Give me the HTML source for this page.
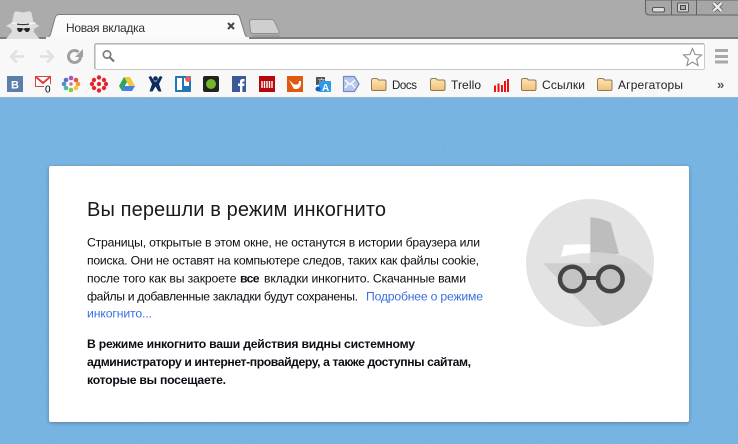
<!DOCTYPE html>
<html lang="ru"><head><meta charset="utf-8"><title>Новая вкладка</title>
<style>
html,body{margin:0;padding:0;width:738px;height:444px;overflow:hidden;background:#74b2e2}
svg{display:block}
text{font-family:"Liberation Sans","DejaVu Sans",sans-serif}
.b{font-size:12.2px;fill:#0c0c14}
.bm{font-size:12px;fill:#222}
</style></head><body>
<svg width="738" height="444" viewBox="0 0 738 444" xmlns="http://www.w3.org/2000/svg">
<defs>
<filter id="sh" x="-5%" y="-5%" width="110%" height="110%"><feGaussianBlur stdDeviation="2"/></filter>
<filter id="noise" x="0" y="0" width="100%" height="100%"><feTurbulence type="fractalNoise" baseFrequency="0.35" numOctaves="2" seed="4"/><feColorMatrix values="0 0 0 0 0.3 0 0 0 0 0.55 0 0 0 0 0.8 0 0 0 0.45 0"/></filter>
<linearGradient id="fold" x1="0" y1="0" x2="0" y2="1"><stop offset="0" stop-color="#fde6b8"/><stop offset="1" stop-color="#f3bf72"/></linearGradient>
<g id="folder"><path d="M.5 3.500q0-2 2-2h3.500l1.500 1.500h6q1.500 0 1.500 1.500v7.500q0 1.500-1.500 1.500h-11.500q-1.500 0-1.500-1.500z" fill="url(#fold)" stroke="#8a7a5a"/></g>
</defs>
<!-- page background -->
<rect width="738" height="444" fill="#74b2e2"/>
<rect y="98" width="738" height="346" filter="url(#noise)" opacity=".5"/>
<!-- frame -->
<rect width="738" height="39" fill="#ababab"/>
<rect y="37" width="738" height="2" fill="#7f7f7f"/>
<!-- window controls -->
<path d="M645.500 0v11q0 4 4 4h89V0z" fill="#a6a6a6" stroke="#626262"/>
<path d="M671.500 0v15M696.500 0v15" stroke="#626262"/>
<rect x="652.500" y="7.500" width="12" height="4.500" rx="1.500" fill="#dcdcdc" stroke="#555"/>
<rect x="677.500" y="3" width="11" height="9" rx="1" fill="#cfcfcf" stroke="#555"/><rect x="680.500" y="5.500" width="5" height="4" fill="#a6a6a6" stroke="#444"/>
<path d="M713.500 3l8 8m0-8l-8 8" stroke="#555" stroke-width="4"/>
<path d="M713.500 3l8 8m0-8l-8 8" stroke="#ececec" stroke-width="2.400"/>
<!-- incognito -->
<path d="M14 13q1-2 4-1.500l5 1 5-1q3-.5 3.500 1.500l2 9.500 6 3.500-5 2.500-1 3 6 7.500H6l6-7.500-1-3-5-2.500 6-3.500z" fill="#dedede"/>
<path d="M12 22q11 2.500 23 0l1 1.500q-12 3-25 0z" fill="#f2f2f2"/>
<path d="M17 23.500q6 1 12 0v1.200q-6 .8-12 0z" fill="#333"/>
<path d="M17 28h5l1 .8h1l1-.8h5l-.5 2.500-1.500 1.500h-2l-2-2.500h-1l-2 2.500h-2l-1.500-1.500z" fill="#262626"/>
<!-- inactive tab -->
<path d="M249.500 22q0-2.500 3-2.500h19q2 0 3 2l4.500 9.500q1 2.500-2 2.500h-24q-2 0-2.500-2z" fill="#cfcfcf" stroke="#8e8e8e"/>
<path d="M252 36h28" stroke="#8e8e8e" stroke-width="1"/>
<!-- toolbar -->
<rect y="39" width="738" height="59" fill="#f8f8f8"/>
<rect y="97" width="738" height="1" fill="#9bb6cc"/>
<!-- active tab -->
<path d="M44 38.500q5 0 6.500-4L55 18q1-3.500 4-3.500h177q3 0 4 3.500l5 16.500q1.500 4 6 4" fill="#fbfbfb" stroke="#7d7d7d"/>
<rect x="46" y="37" width="203" height="3" fill="#f8f8f8"/>
<text x="66" y="32" font-size="12" fill="#333" textLength="79" lengthAdjust="spacing">Новая вкладка</text>
<path d="M228 23l6 6m0-6l-6 6" stroke="#444" stroke-width="2"/>
<!-- nav -->
<path d="M11 56.500h13M17 50.500l-6 6 6 6" fill="none" stroke="#e0e0e0" stroke-width="2.600"/>
<path d="M53 56.500H40M47 50.500l6 6-6 6" fill="none" stroke="#e0e0e0" stroke-width="2.600"/>
<path d="M80.500 57a6 6 0 1 1-2-5" fill="none" stroke="#a0a0a0" stroke-width="3"/><path d="M83 49v8h-8z" fill="#a0a0a0"/>
<!-- omnibox -->
<rect x="94.500" y="43.500" width="610" height="26" rx="2" fill="#fff" stroke="#c9c9c9"/>
<path d="M95 69v-24q0-1 1-1h608" fill="none" stroke="#a8a8a8"/>
<circle cx="107" cy="54.500" r="3.700" fill="none" stroke="#777" stroke-width="1.600"/><path d="M110 57.500l4 4" stroke="#777" stroke-width="2.200"/>
<path d="M692.500 48.500l2.600 6 6.400.5-4.900 4.200 1.500 6.300-5.600-3.300-5.600 3.300 1.500-6.300-4.900-4.200 6.400-.5z" fill="#fff" stroke="#8c8c8c" stroke-width="1.100"/>
<path d="M715 50.500h13M715 56.500h13M715 62h13" stroke="#a9a9a9" stroke-width="3"/>
<!-- bookmarks -->
<rect x="7" y="76" width="16" height="16" fill="#5b7fa8"/><text x="11" y="88.500" font-size="11" font-weight="bold" fill="#fff">В</text>
<path d="M35.500 76.500h15v10h-15z" fill="#fff" stroke="#d8433c"/><path d="M35.500 76.500l7.500 6.500 7.500-6.500" fill="none" stroke="#d8433c" stroke-width="2"/>
<rect x="44" y="84" width="8" height="9" fill="#f8f8f8"/><text x="45" y="92.500" font-size="10" fill="#000">0</text>
<g><circle cx="71" cy="78" r="2.300" fill="#a45ab5"/><circle cx="76" cy="80" r="2.300" fill="#e0564a"/><circle cx="78" cy="84" r="2.300" fill="#f09a3e"/><circle cx="76" cy="88" r="2.300" fill="#f2c744"/><circle cx="71" cy="90" r="2.300" fill="#8cc850"/><circle cx="66" cy="88" r="2.300" fill="#4cb8a8"/><circle cx="64" cy="84" r="2.300" fill="#4a90d0"/><circle cx="66" cy="80" r="2.300" fill="#5a6ec8"/><circle cx="71" cy="84" r="1.700" fill="#d86a8a"/></g>
<g fill="#e3262e"><circle cx="99" cy="77.500" r="2.200"/><circle cx="104" cy="80" r="2.200"/><circle cx="106" cy="84" r="2.200"/><circle cx="104" cy="88" r="2.200"/><circle cx="99" cy="90.500" r="2.200"/><circle cx="94" cy="88" r="2.200"/><circle cx="92" cy="84" r="2.200"/><circle cx="94" cy="80" r="2.200"/><circle cx="99" cy="84" r="2.200"/></g>
<path d="M124 77h6l5 9h-6z" fill="#f6c73c"/><path d="M124 77l3 5-5 9-3-5z" fill="#2ea65a"/><path d="M124 86h11l-3 5h-10z" fill="#4a80e0"/>
<g fill="#0f2d5c"><circle cx="155.500" cy="78.500" r="2.300"/><path d="M148.500 77l2.500-1 3.500 5.500h2l3.500-5.500 2.500 1-3.500 7 2.500 7.500h-3l-3-5-3 5h-3l2.500-7.500z"/></g>
<rect x="175" y="76" width="16" height="16" rx="1" fill="#1f78b4"/><rect x="177" y="78" width="5" height="12" fill="#fff"/><rect x="184" y="78" width="5" height="8" fill="#fff"/><circle cx="188" cy="79" r="3" fill="#e8605a"/>
<rect x="203" y="76" width="16" height="16" rx="2" fill="#222"/><circle cx="211" cy="84" r="5" fill="#74b52a"/>
<rect x="232" y="76" width="14" height="16" fill="#3d5a98"/><path d="M240 92v-6h-2v-2.500h2v-2q0-2.500 2.800-2.500h1.700v2.500h-1.200q-.9 0-.9 1v1h2.100l-.3 2.500h-1.800v6z" fill="#fff"/>
<rect x="259" y="76" width="16" height="16" fill="#b8060c"/><path d="M262 81v7M264.500 81v7M267 81v7M269.500 81v7M272 81v7" stroke="#fff" stroke-width="1.400"/>
<rect x="287" y="76" width="16" height="16" fill="#df5a10"/><path d="M289 80l5 4.500h3q2-.5 2-3.500h2q.5 7-4 8h-3z" fill="#fff"/>
<path d="M316 77h9v8h-9z" fill="#555"/><text x="318" y="84" font-size="7" fill="#fff" style="font-family:'Noto Sans CJK SC',sans-serif">文</text>
<rect x="319" y="81" width="12" height="11" rx="1" fill="#2f9be6"/><text x="322" y="91" font-size="10" font-weight="bold" fill="#fff">A</text><circle cx="318" cy="89" r="2.500" fill="#1461c0"/>
<path d="M343.500 76.500h11l4.500 7.500-4.500 7.500h-11z" fill="#b9c8ea" stroke="#6f8cc4" stroke-width="1.200"/><path d="M345 80l5 4.500 5-4.500M345 88l3.500-4.500M355 88l-3.500-4.500" fill="none" stroke="#fff" stroke-width="1.300"/>
<use href="#folder" x="371" y="77"/><text class="bm" x="392" y="89" font-size="11.500" style="font-size:11.500px" textLength="25">Docs</text>
<use href="#folder" x="430" y="77"/><text class="bm" x="451" y="89" textLength="30">Trello</text>
<path d="M495 85.500v6.500M498.500 83.500v8.500M502 85v7M505 81v11M508 79v13" stroke="#f01010" stroke-width="2"/>
<use href="#folder" x="521" y="77"/><text class="bm" x="542" y="89" textLength="43">Ссылки</text>
<use href="#folder" x="597" y="77"/><text class="bm" x="618" y="89" textLength="65">Агрегаторы</text>
<text x="717" y="89" font-size="13" font-weight="bold" fill="#555">»</text>
<!-- card -->
<rect x="49" y="167" width="640" height="256" rx="2" fill="#000" opacity=".28" filter="url(#sh)"/>
<rect x="49" y="166" width="640" height="256" rx="2" fill="#fff"/>
<text x="87" y="216" font-size="20" fill="#1a1a1a" textLength="299">Вы перешли в режим инкогнито</text>
<text class="b" x="87" y="246.500" textLength="393">Страницы, открытые в этом окне, не останутся в истории браузера или</text>
<text class="b" x="87" y="264.500" textLength="392">поиска. Они не оставят на компьютере следов, таких как файлы cookie,</text>
<text class="b" x="87" y="282.500" textLength="149.500">после того как вы закроете</text>
<text class="b" x="240" y="282.500" font-weight="bold" textLength="19.500">все</text>
<text class="b" x="264" y="282.500" textLength="202">вкладки инкогнито. Скачанные вами</text>
<text class="b" x="87" y="300.500" textLength="271">файлы и добавленные закладки будут сохранены.</text>
<text class="b" x="366" y="300.500" style="fill:#3b6fe0" textLength="117">Подробнее о режиме</text>
<text class="b" x="87" y="317.500" style="fill:#3b6fe0" textLength="65">инкогнито...</text>
<text class="b" x="87" y="348" font-weight="bold" textLength="328">В режиме инкогнито ваши действия видны системному</text>
<text class="b" x="87" y="366" font-weight="bold" textLength="384">администратору и интернет-провайдеру, а также доступны сайтам,</text>
<text class="b" x="87" y="384" font-weight="bold" textLength="139">которые вы посещаете.</text>
<!-- illustration -->
<circle cx="590" cy="263" r="64" fill="#e3e3e3"/>
<path d="M543 263.300H636.700L652.700 278A64 64 0 0 1 603 325.700Z" fill="#cfcfcf"/>
<path d="M590.300 217.300q10 .5 20.400 5.400l8.300 31.300h-28.700z" fill="#bdbdbd"/>
<path d="M564 245q13-.7 26.300-.7V253q-15 .5-29.500 3.700z" fill="#fff"/>
<path d="M590.300 252q16 .2 30 3.300 9 2.500 16.400 8H590.300z" fill="#d2d2d2"/>
<g fill="#000" fill-opacity=".05" stroke="#444" stroke-width="4.500"><circle cx="572.300" cy="279" r="12.300"/><circle cx="610.300" cy="279" r="12.300"/></g>
<path d="M584.500 278h13.500" stroke="#444" stroke-width="4"/>
</svg>
</body></html>
